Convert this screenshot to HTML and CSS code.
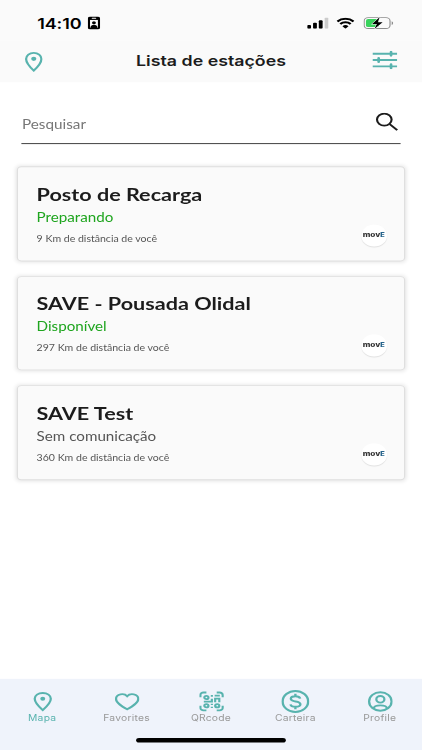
FILE: index.html
```
<!DOCTYPE html>
<html lang="pt-BR">
<head>
  <meta charset="UTF-8">
  <meta name="viewport" content="width=device-width, initial-scale=1.0">
  <title>Lista de estações</title>
  <link rel="stylesheet" href="styles.css">
</head>
<body>
  <div class="screen">
    <div class="status-bar">
      <span class="time">14:10</span>
      <svg class="badge-icon" viewBox="0 0 11 14">
        <rect width="11" height="14" rx="2.2" fill="#000"/>
        <rect x="3.5" y="1.3" width="4" height="1.1" rx=".5" fill="#fafafa"/>
        <rect x="2" y="3.6" width="7" height="8.6" fill="#fafafa"/>
        <circle cx="5.5" cy="6.6" r="1.7" fill="#000"/>
        <path d="M2.3 12.2c0-4.6 6.4-4.6 6.4 0z" fill="#000"/>
      </svg>
      <svg class="signal" viewBox="0 0 19 12">
        <rect x="0" y="8" width="3.4" height="4" rx="1"/>
        <rect x="5.2" y="5.6" width="3.4" height="6.4" rx="1"/>
        <rect x="10.3" y="3" width="3.4" height="9" rx="1"/>
        <rect x="15.5" y="0" width="3.4" height="12" rx="1" fill="#ccc"/>
      </svg>
      <svg class="wifi" viewBox="0 0 16 12" fill="none" stroke="#000" stroke-width="2.2">
        <path d="M.8 4.3a10.3 10.3 0 0 1 14.4 0M3.4 7a6.7 6.7 0 0 1 9.2 0"/>
        <path d="M8 12 5.3 9.3a3.9 3.9 0 0 1 5.4 0z" fill="#000" stroke="none"/>
      </svg>
      <svg class="battery" viewBox="0 0 27 14">
        <rect x=".6" y="1.1" width="23" height="11.8" rx="3.6" fill="none" stroke="#8c8c8c"/>
        <path d="M25.1 5v4c1.7-.7 1.7-3.3 0-4z" fill="#8c8c8c"/>
        <rect x="2.2" y="2.7" width="11.5" height="8.6" rx="2" fill="#39d35c"/>
        <path d="M14.5.5 7.7 8h4.2L9.7 13.500 17 6h-4.300z" fill="#000" stroke="#fafafa" stroke-width=".9" paint-order="stroke"/>
      </svg>
    </div>

    <header class="header">
      <svg class="pin" viewBox="0 0 16 22">
        <path d="M8 1.200c-3.800 0-6.800 2.900-6.800 6.700C1.200 12.800 8 20.500 8 20.500s6.800-7.700 6.800-12.600c0-3.800-3-6.700-6.800-6.700z"/>
        <circle class="dot" cx="8" cy="7.700" r="2.300"/>
      </svg>
      <h1>Lista de estações</h1>
      <svg class="filter" viewBox="0 0 22 20">
        <path d="M0 3.200h22M0 10h22M0 16.800h22"/>
        <path class="knob" d="M16.500 1.200v4M5.500 8v4M16.500 14.800v4"/>
      </svg>
    </header>

    <main class="content">
      <div class="search">
        <span>Pesquisar</span>
        <svg viewBox="0 0 20 20">
          <circle cx="7.500" cy="7.500" r="6.500"/>
          <path d="m12.300 12.300 6.700 6.700"/>
        </svg>
      </div>

      <section class="card">
        <h2>Posto de Recarga</h2>
        <p class="state available">Preparando</p>
        <div class="row">
          <p class="distance">9 Km de distância de você</p>
          <div class="logo"><span>mov<b>E</b></span></div>
        </div>
      </section>

      <section class="card">
        <h2>SAVE - Pousada Olidal</h2>
        <p class="state available">Disponível</p>
        <div class="row">
          <p class="distance">297 Km de distância de você</p>
          <div class="logo"><span>mov<b>E</b></span></div>
        </div>
      </section>

      <section class="card">
        <h2>SAVE Test</h2>
        <p class="state">Sem comunicação</p>
        <div class="row">
          <p class="distance">360 Km de distância de você</p>
          <div class="logo"><span>mov<b>E</b></span></div>
        </div>
      </section>
    </main>

    <nav class="tabs">
      <a class="tab active">
        <svg viewBox="0 0 24 24">
          <path d="M12 2C7.500 2 4.200 4.900 4.200 8.900 4.200 14 12 22.300 12 22.300s7.800-8.300 7.800-13.400C19.800 4.900 16.500 2 12 2z"/>
          <circle class="dot" cx="12" cy="8.700" r="2.400"/>
        </svg>
        <span>Mapa</span>
      </a>
      <a class="tab">
        <svg viewBox="0 0 24 24">
          <path d="M12 21.300C7 17.800 1.200 13.700 1.200 9.100c0-6.300 8-7.300 10.800-3.300 2.800-4 10.800-3 10.800 3.300 0 4.600-5.800 8.700-10.800 12.200z"/>
        </svg>
        <span>Favorites</span>
      </a>
      <a class="tab">
        <svg class="qr" viewBox="0 0 24 24">
          <path d="M1.200 7V4.400a3 3 0 0 1 3-3H7M17 1.400h2.800a3 3 0 0 1 3 3V7M22.800 17v2.600a3 3 0 0 1-3 3H17M7 22.600H4.200a3 3 0 0 1-3-3V17"/>
          <circle cx="7" cy="7.300" r="2"/>
          <circle cx="7" cy="17" r="2"/>
          <circle cx="17.500" cy="17" r="2"/>
          <path d="M12.300 4.300v2M12.300 8.800v3.400H4.500M15.500 12.800V8.700h4v4.100M15 5.200h5M12.300 14.700v1.500M12.300 18.300v1.500"/>
        </svg>
        <span>QRcode</span>
      </a>
      <a class="tab">
        <svg class="coin" viewBox="0 0 26 26">
          <circle cx="13" cy="13" r="11.800"/>
          <path d="M17.400 9.800c-.4-1.700-1.900-2.600-4.300-2.600-2.600 0-4.300 1-4.300 2.800 0 4.300 8.800 1.800 8.800 6.100 0 1.800-1.900 2.800-4.500 2.800-2.500 0-4.300-.9-4.600-2.700M13 4.300v2.900M13 18.900v2.900"/>
        </svg>
        <span>Carteira</span>
      </a>
      <a class="tab">
        <svg viewBox="0 0 24 24">
          <circle cx="12" cy="12" r="10.900"/>
          <circle cx="12" cy="9.500" r="3.900"/>
          <path d="M5.500 20.300c.5-5 12.500-5 13 0"/>
        </svg>
        <span>Profile</span>
      </a>
      <div class="home-indicator"></div>
    </nav>
  </div>
</body>
</html>
```
FILE: styles.css
```
* {
  box-sizing: border-box;
}

body {
  margin: 0;
  background: #fff;
  font-family: Lato, sans-serif;
}

/* 375x812 phone canvas fitted to the viewport */
.screen {
  width: 375px;
  height: 812px;
  margin-bottom: -62px;
  display: flex;
  flex-direction: column;
  transform: scale(1.1253, 0.9236);
  transform-origin: 0 0;
}

h1, h2, p {
  margin: 0;
}

svg {
  display: block;
  flex-shrink: 0;
}

.status-bar {
  height: 44px;
  padding: 6px 25px 0 33px;
  display: flex;
  align-items: center;
  background: #fafafa;
}

.time {
  width: 41px;
  font: 600 16px/20px Inter, sans-serif;
  letter-spacing: -0.1px;
  white-space: nowrap;
}

.badge-icon {
  width: 11px;
  height: 14px;
  margin-left: 4px;
}

.signal {
  width: 19px;
  height: 12px;
  margin-left: auto;
}

.wifi {
  width: 16px;
  height: 12px;
  margin-left: 7px;
}

.battery {
  width: 27px;
  height: 14px;
  margin-left: 8px;
}

.header {
  height: 45px;
  padding: 0 22px;
  display: flex;
  align-items: center;
  justify-content: space-between;
  background: #fafafa;
}

.header h1 {
  margin-right: -6px;
  font: 600 15.8px/20px Inter, sans-serif;
  color: #1c1c1c;
}

.pin {
  width: 16px;
  height: 22px;
}

.filter {
  width: 22px;
  height: 20px;
  margin-top: -3px;
}

.pin, .filter {
  fill: none;
  stroke: #58b3ae;
  stroke-width: 2;
}

.pin .dot, .tab .dot {
  fill: #58b3ae;
  stroke: none;
}

.filter .knob {
  stroke-width: 2.4;
  stroke-linecap: round;
}

.content {
  flex: 1;
  padding: 30.5px 15.5px 0 15px;
}

.search {
  height: 36.5px;
  margin: 0 4px 24px;
  padding: 0 2px 11px 0.5px;
  display: flex;
  align-items: center;
  justify-content: space-between;
  border-bottom: 1px solid #333;
  font-size: 13.6px;
  color: #777;
}

.search span {
  padding-top: 7px;
}

.search svg {
  width: 20px;
  height: 20px;
  fill: none;
  stroke: #1c1c1c;
  stroke-width: 1.9;
}

.card {
  height: 102.5px;
  margin-bottom: 16.2px;
  padding: 16.5px 15px 0 16.5px;
  background: #fafafa;
  border: 1px solid #dfdfdf;
  border-radius: 4px;
  box-shadow: 0 0 4px rgba(0, 0, 0, 0.12);
}

.card h2 {
  font-size: 19.2px;
  line-height: 25px;
  font-weight: 700;
  color: #1c1c1c;
}

.state {
  font-size: 13.5px;
  line-height: 24px;
  color: #555;
}

.state.available {
  color: #1fa51f;
}

.row {
  display: flex;
  justify-content: space-between;
  align-items: flex-start;
}

.distance {
  font-size: 9.4px;
  line-height: 23px;
  color: #555;
}

.logo {
  width: 23px;
  height: 24px;
  margin-top: -3.5px;
  border-radius: 50%;
  display: flex;
  align-items: center;
  justify-content: center;
  background: #fff;
  box-shadow: 0 1px 1px rgba(0, 0, 0, 0.1);
  font: 800 6.8px/24px Inter, sans-serif;
  color: #333;
}

.logo span {
  transform: scaleX(1.08);
}

.logo b {
  font-size: 6px;
  color: #28658c;
}

.tabs {
  position: relative;
  height: 77px;
  padding-top: 12.5px;
  display: grid;
  grid-template-columns: repeat(5, 1fr);
  align-items: start;
  background: #eff3fb;
}

.tab {
  display: flex;
  flex-direction: column;
  align-items: center;
  font: 400 9.2px/12px Inter, sans-serif;
  letter-spacing: 0.2px;
  color: #999;
}

.tab.active {
  color: #58b3ae;
}

.tab svg {
  width: 22px;
  height: 23px;
  margin-bottom: 1px;
  fill: none;
  stroke: #58b3ae;
  stroke-width: 2.2;
}

.tab .qr {
  stroke-width: 2.1;
}

.tab .coin {
  width: 25px;
  height: 25px;
  margin: -1px 0 0;
}

.home-indicator {
  position: absolute;
  left: 121px;
  bottom: 8px;
  width: 133px;
  height: 5px;
  border-radius: 3px;
  background: #000;
}
```
